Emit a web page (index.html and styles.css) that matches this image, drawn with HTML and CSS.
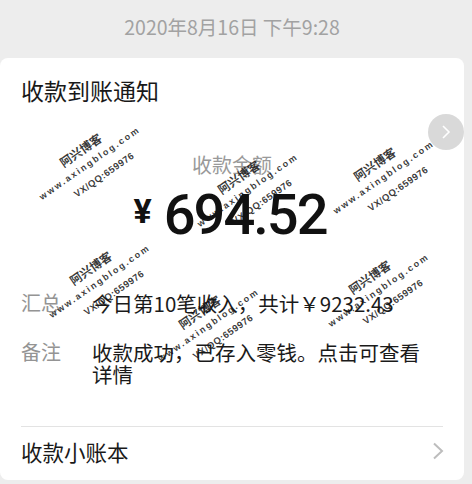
FILE: index.html
```html
<!DOCTYPE html>
<html lang="zh-CN">
<head>
    <meta charset="UTF-8">
    <meta name="viewport" content="width=device-width, initial-scale=1.0">
    <title>收款到账通知</title>
    <link rel="stylesheet" href="styles.css">
</head>
<body>
    <div class="time">2020年8月16日 下午9:28</div>

    <section class="card">
        <h1 class="card-title">收款到账通知</h1>
        <span class="more-btn">
            <svg width="12" height="16" viewBox="0 0 12 16"><polyline points="3,2 9,8 3,14" fill="none" stroke="#fff" stroke-width="1.6"/></svg>
        </span>

        <div class="amount-label">收款金额</div>
        <div class="amount">
            <span class="yen">¥</span>
            <span class="num">694.52</span>
        </div>

        <div class="row row-first">
            <span class="label">汇总</span>
            <span class="value">今日第10笔收入，共计￥9232.43</span>
        </div>
        <div class="row row-note">
            <span class="label">备注</span>
            <span class="value">收款成功，已存入零钱。点击可查看详情</span>
        </div>

        <div class="ledger">
            <span>收款小账本</span>
            <svg width="12" height="18" viewBox="0 0 12 18"><polyline points="2,1.5 10,9 2,16.5" fill="none" stroke="#bdbdbd" stroke-width="2"/></svg>
        </div>
    </section>

    <!-- 水印 -->
    <div class="wm wm-a"><div class="wm-name">阿兴博客</div><div class="wm-site">www.axingblog.com</div><div class="wm-qq">VX/QQ:659976</div></div>
    <div class="wm wm-b"><div class="wm-name">阿兴博客</div><div class="wm-site">www.axingblog.com</div><div class="wm-qq">VX/QQ:659976</div></div>
    <div class="wm wm-c"><div class="wm-name">阿兴博客</div><div class="wm-site">www.axingblog.com</div><div class="wm-qq">VX/QQ:659976</div></div>
    <div class="wm wm-d"><div class="wm-name">阿兴博客</div><div class="wm-site">www.axingblog.com</div><div class="wm-qq">VX/QQ:659976</div></div>
    <div class="wm wm-e"><div class="wm-name">阿兴博客</div><div class="wm-site">www.axingblog.com</div><div class="wm-qq">VX/QQ:659976</div></div>
    <div class="wm wm-f"><div class="wm-name">阿兴博客</div><div class="wm-site">www.axingblog.com</div><div class="wm-qq">VX/QQ:659976</div></div>
</body>
</html>
```

FILE: styles.css
```css
body {
    font-family: "Noto Sans CJK SC", sans-serif;
    margin: 0;
    padding: 0;
    width: 472px;
    height: 484px;
    overflow: hidden;
    position: relative;
    background-color: #ededed;
}

.time {
    width: 464px;
    padding-top: 13px;
    height: 45px;
    line-height: 27px;
    text-align: center;
    font-size: 19.5px;
    color: #a2a2a2;
}

.card {
    position: relative;
    width: 464px;
    background: white;
    border-radius: 8px;
    overflow: hidden;
}

.card-title {
    margin: 0;
    padding: 17px 0 0 21px;
    font-size: 23px;
    font-weight: normal;
    line-height: 30px;
    color: #191919;
}

.more-btn {
    position: absolute;
    left: 428px;
    top: 56px;
    width: 36px;
    height: 36px;
    border-radius: 50%;
    background: #d9d9d9;
    display: flex;
    align-items: center;
    justify-content: center;
}

.amount-label {
    margin-top: 46px;
    text-align: center;
    font-size: 20px;
    line-height: 28px;
    color: #999;
}

.amount {
    margin-top: 8px;
    display: flex;
    justify-content: center;
    align-items: flex-start;
    height: 56px;
    padding-right: 4px;
    font-family: Roboto, sans-serif;
    color: #111;
}

.yen {
    margin-top: 7px;
    margin-right: 12px;
    font-size: 34px;
    font-weight: 700;
    line-height: 34px;
}

.num {
    font-size: 56px;
    font-weight: 500;
    line-height: 56px;
    letter-spacing: -2px;
}

.row {
    display: flex;
    padding: 0 40px 0 21px;
    font-size: 20.5px;
    color: #1a1a1a;
}

.row-first {
    margin-top: 48px;
    line-height: 24px;
}

.row-note {
    margin-top: 26px;
    line-height: 22px;
}

.label {
    width: 71px;
    flex-shrink: 0;
    font-size: 20px;
    color: #949494;
}

.ledger {
    margin: 41px 21px 0;
    border-top: 1px solid #e3e3e3;
    height: 48px;
    padding-bottom: 5px;
    display: flex;
    align-items: center;
    justify-content: space-between;
    font-size: 21.5px;
    color: #191919;
}

.ledger svg {
    margin-right: -1px;
}

/* 水印 */
.wm {
    position: absolute;
    width: 160px;
    text-align: center;
    line-height: 17px;
    color: rgba(20, 20, 20, 0.85);
    font-weight: bold;
    transform: rotate(-35deg);
}

.wm-name {
    font-size: 12px;
}

.wm-site {
    font-family: "Liberation Sans", sans-serif;
    font-size: 9px;
    letter-spacing: 2px;
}

.wm-qq {
    font-family: "Liberation Sans", sans-serif;
    font-size: 9.5px;
    letter-spacing: 0.5px;
    padding-left: 10px;
}

.wm-a { left: 10px;  top: 138px; }
.wm-b { left: 168px; top: 165px; }
.wm-c { left: 304px; top: 152px; }
.wm-d { left: 20px;  top: 256px; }
.wm-e { left: 129px; top: 300px; }
.wm-f { left: 299px; top: 265px; }
```
